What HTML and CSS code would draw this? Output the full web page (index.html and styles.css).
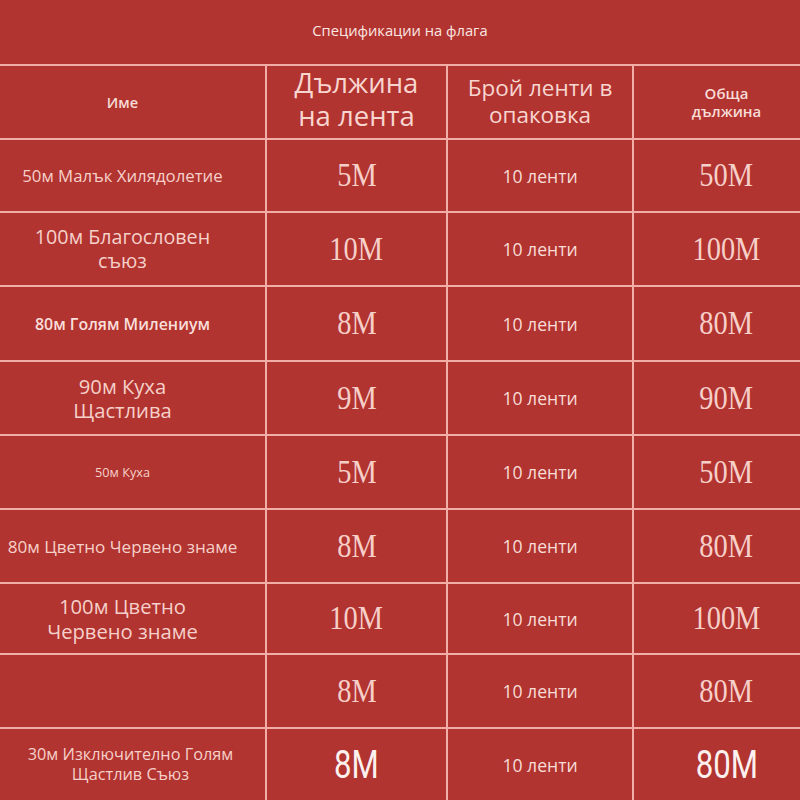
FILE: index.html
```html
<!DOCTYPE html>
<html lang="bg">
<head>
<meta charset="utf-8">
<link rel="stylesheet" href="styles.css">
</head>
<body>
<div class="sheet">
  <div class="cell title">Спецификации на флага</div>

  <div class="cell c1 h-name">Име</div>
  <div class="cell c2 h-len"><span class="ln">Дължина</span><span class="ln">на лента</span></div>
  <div class="cell c3 h-count"><span class="ln">Брой ленти в</span><span class="ln">опаковка</span></div>
  <div class="cell c4 h-total"><span class="ln">Обща</span><span class="ln">дължина</span></div>

  <div class="cell c1 n15">50м Малък Хилядолетие</div>
  <div class="cell c2 num"><span>5M</span></div>
  <div class="cell c3 cnt">10 ленти</div>
  <div class="cell c4 num"><span>50M</span></div>

  <div class="cell c1 n18"><span class="ln">100м Благословен</span><span class="ln">съюз</span></div>
  <div class="cell c2 num"><span>10M</span></div>
  <div class="cell c3 cnt">10 ленти</div>
  <div class="cell c4 num"><span>100M</span></div>

  <div class="cell c1 n16b">80м Голям Милениум</div>
  <div class="cell c2 num"><span>8M</span></div>
  <div class="cell c3 cnt">10 ленти</div>
  <div class="cell c4 num"><span>80M</span></div>

  <div class="cell c1 n19"><span class="ln">90м Куха</span><span class="ln">Щастлива</span></div>
  <div class="cell c2 num"><span>9M</span></div>
  <div class="cell c3 cnt">10 ленти</div>
  <div class="cell c4 num"><span>90M</span></div>

  <div class="cell c1 n12">50м Куха</div>
  <div class="cell c2 num"><span>5M</span></div>
  <div class="cell c3 cnt">10 ленти</div>
  <div class="cell c4 num"><span>50M</span></div>

  <div class="cell c1 n16">80м Цветно Червено знаме</div>
  <div class="cell c2 num"><span>8M</span></div>
  <div class="cell c3 cnt">10 ленти</div>
  <div class="cell c4 num"><span>80M</span></div>

  <div class="cell c1 n19"><span class="ln">100м Цветно</span><span class="ln">Червено знаме</span></div>
  <div class="cell c2 num"><span>10M</span></div>
  <div class="cell c3 cnt">10 ленти</div>
  <div class="cell c4 num"><span>100M</span></div>

  <div class="cell c1"></div>
  <div class="cell c2 num"><span>8M</span></div>
  <div class="cell c3 cnt">10 ленти</div>
  <div class="cell c4 num"><span>80M</span></div>

  <div class="cell c1 n155"><span class="ln">30м Изключително Голям</span><span class="ln">Щастлив Съюз</span></div>
  <div class="cell c2 num sans"><span>8M</span></div>
  <div class="cell c3 cnt">10 ленти</div>
  <div class="cell c4 num sans"><span>80M</span></div>
</div>
</body>
</html>
```

FILE: styles.css
```css
html, body {
  margin: 0;
  padding: 0;
  background: #b13430;
}

.sheet {
  width: 800px;
  height: 800px;
  display: grid;
  grid-template-columns: 265px 179px 184px 1fr;
  grid-template-rows: 64px 72px 71px 72px 73px 72px 72px 72px 69px 72px 1fr;
  gap: 2px;
  background: #f0aea7;
  font-family: "Open Sans", "Noto Sans", sans-serif;
  color: #f6d0ca;
  overflow: hidden;
}

.cell {
  background: #b13430;
  display: flex;
  flex-direction: column;
  align-items: center;
  justify-content: center;
  text-align: center;
}

.ln {
  display: block;
  white-space: nowrap;
}

.title {
  grid-column: 1 / -1;
  font-size: 14.7px;
  font-weight: 500;
  color: #fbe6e2;
  padding-bottom: 4px;
}

.c1 { padding-right: 20px; }
.c4 { padding-left: 19px; }

.h-name {
  font-size: 14.5px;
  font-weight: 600;
  color: #f8dcd7;
}

.h-len {
  font-size: 27.5px;
  line-height: 33px;
  color: #f8d6d0;
  padding-bottom: 6px;
}

.h-count {
  font-size: 22.5px;
  line-height: 26px;
  color: #f8d6d0;
  padding-bottom: 2px;
}

.h-total {
  font-size: 15px;
  line-height: 18px;
  font-weight: 600;
  color: #f8dcd7;
}

.h-len .ln, .h-count .ln, .h-total .ln,
.n18 .ln, .n19 .ln, .n155 .ln {
  line-height: 1.2;
}

.h-len .ln + .ln { margin-top: 0; }

.n15 { font-size: 16.8px; }
.n16 { font-size: 17.1px; }
.n16b { font-size: 15.9px; font-weight: 600; color: #f9dfda; }
.n18 { font-size: 19.7px; }
.n19 { font-size: 20.2px; }
.n12 { font-size: 12.7px; }
.n155 { font-size: 16.3px; padding-right: 4px; }

.cnt {
  font-size: 17.6px;
  color: #f8dcd7;
}

.num span {
  display: inline-block;
  font-family: "Liberation Serif", "Times New Roman", serif;
  font-size: 33px;
  line-height: 1;
  transform: scaleX(0.86);
  color: #f7cfc9;
}

.num.sans span {
  font-family: Roboto, "Liberation Sans", sans-serif;
  font-size: 38px;
  transform: scaleX(0.82);
  color: #fdf1ef;
}
```
